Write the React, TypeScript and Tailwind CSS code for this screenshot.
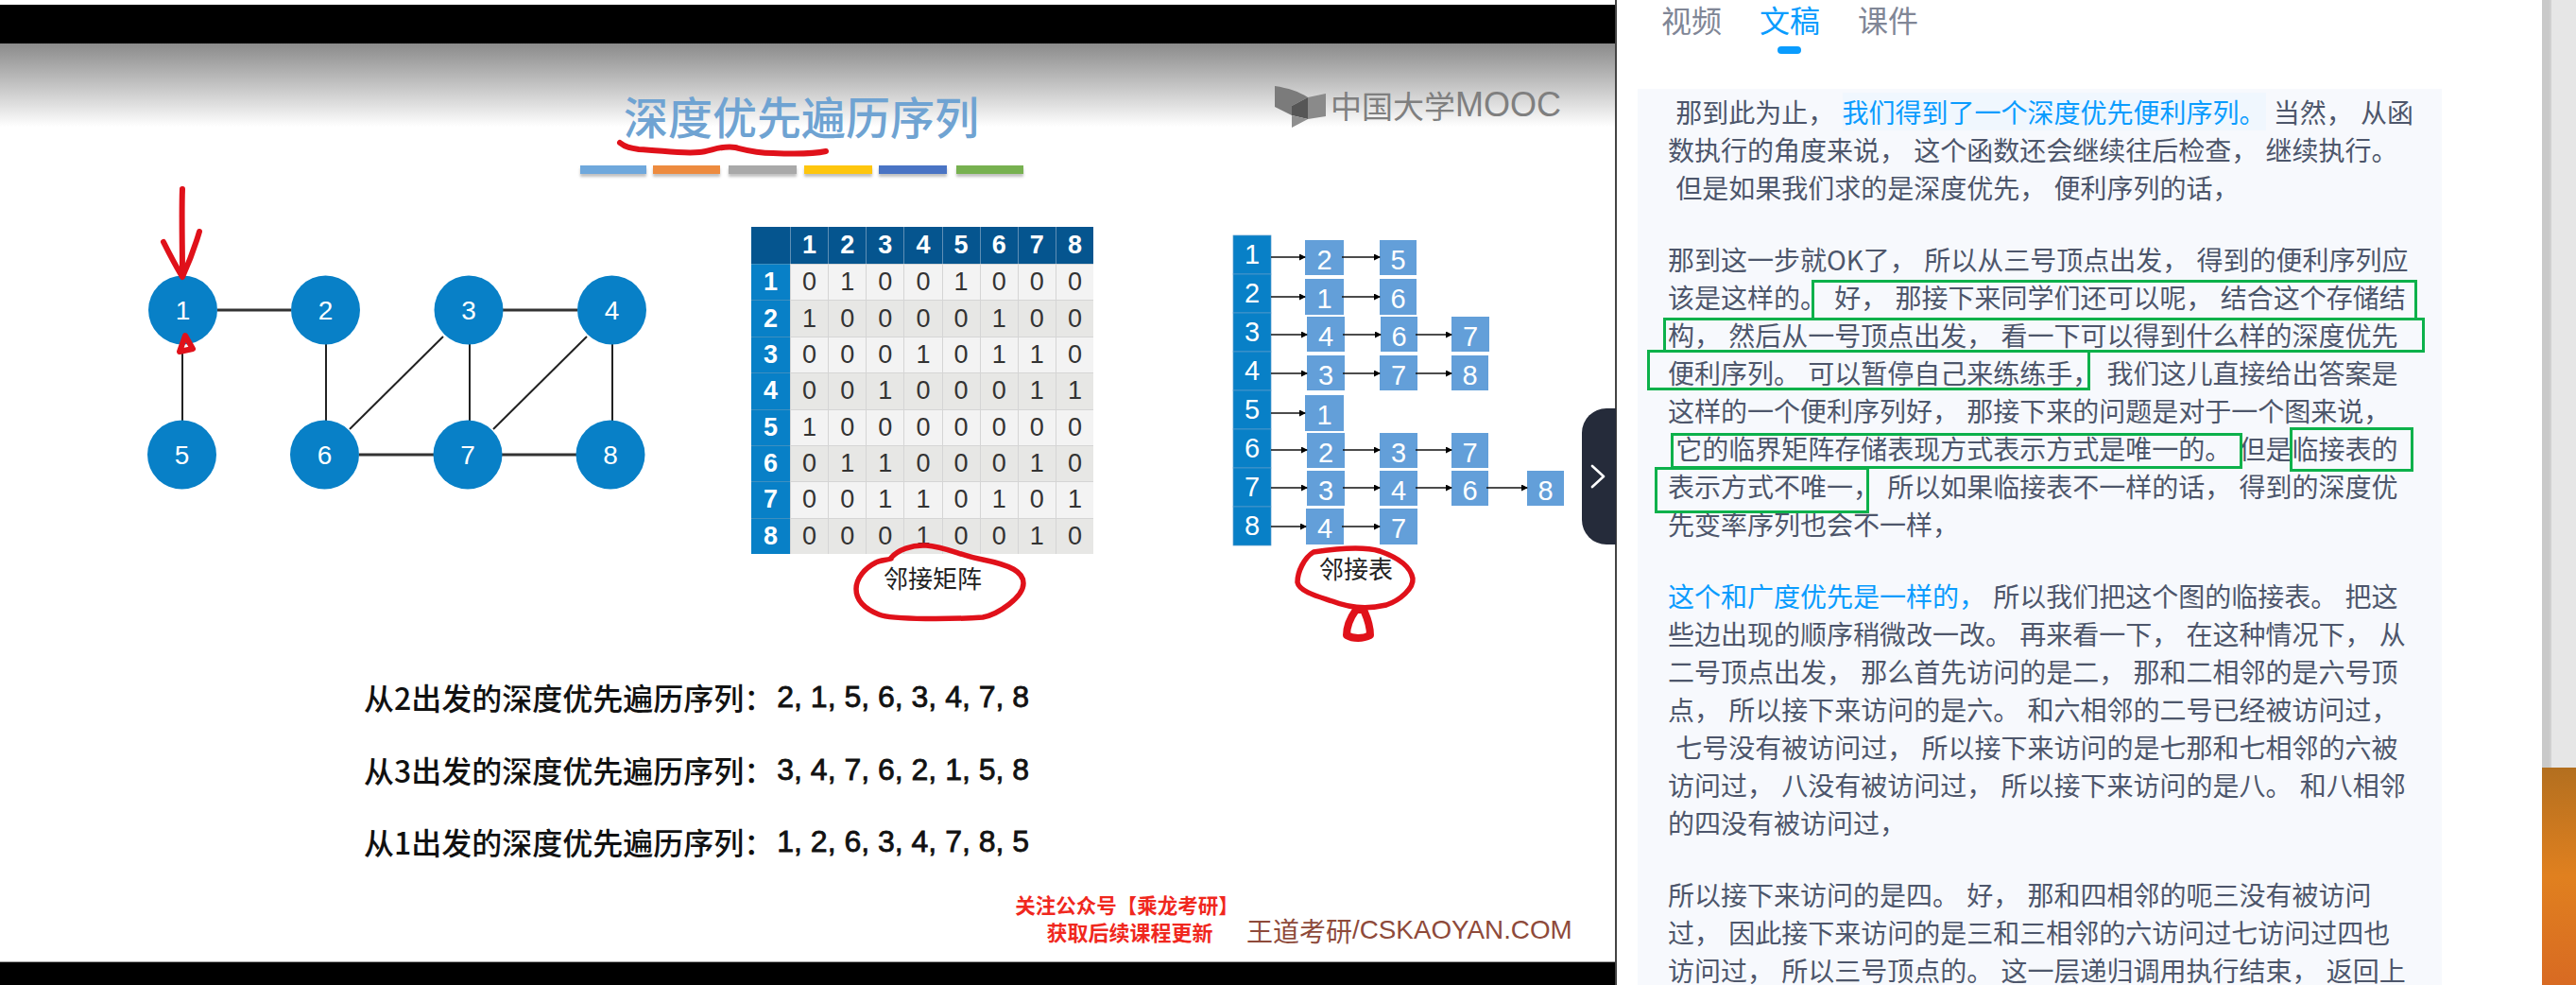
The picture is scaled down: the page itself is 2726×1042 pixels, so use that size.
import React from "react";

const cjk = "font-['Noto_Sans_CJK_SC','Liberation_Sans',sans-serif]";

const matrix = [
  [0, 1, 0, 0, 1, 0, 0, 0],
  [1, 0, 0, 0, 0, 1, 0, 0],
  [0, 0, 0, 1, 0, 1, 1, 0],
  [0, 0, 1, 0, 0, 0, 1, 1],
  [1, 0, 0, 0, 0, 0, 0, 0],
  [0, 1, 1, 0, 0, 0, 1, 0],
  [0, 0, 1, 1, 0, 1, 0, 1],
  [0, 0, 0, 1, 0, 0, 1, 0],
];

const nodes: [string, number, number][] = [
  ["1", 193.5, 328],
  ["2", 344.5, 328],
  ["3", 496, 328],
  ["4", 647.5, 328],
  ["5", 192.5, 481],
  ["6", 343.5, 481],
  ["7", 495, 481],
  ["8", 646, 481],
];

const thickEdges = [
  [230, 328, 308, 328],
  [532, 328, 611, 328],
  [380, 481, 459, 481],
  [531, 481, 610, 481],
];
const thinEdges = [
  [193, 364, 193, 446],
  [345, 364, 345, 446],
  [497, 364, 497, 446],
  [648, 364, 648, 446],
  [370, 454, 469, 356],
  [522, 454, 621, 356],
];

type Cell = [string, number, number];
const adjacency: { y: number; h: number; ay: number; row: string; cells: Cell[] }[] = [
  { row: "1", y: 254, h: 37, ay: 272, cells: [["2", 1381, 41], ["5", 1460, 39]] },
  { row: "2", y: 295, h: 38, ay: 314, cells: [["1", 1381, 41], ["6", 1460, 39]] },
  { row: "3", y: 335, h: 37, ay: 354, cells: [["4", 1383, 40], ["6", 1461, 39], ["7", 1536, 40]] },
  { row: "4", y: 376, h: 37, ay: 395, cells: [["3", 1383, 40], ["7", 1460, 40], ["8", 1536, 39]] },
  { row: "5", y: 418, h: 38, ay: 437, cells: [["1", 1381, 41]] },
  { row: "6", y: 458, h: 37, ay: 476, cells: [["2", 1383, 40], ["3", 1460, 40], ["7", 1536, 39]] },
  { row: "7", y: 498, h: 37, ay: 516, cells: [["3", 1383, 40], ["4", 1460, 40], ["6", 1536, 39], ["8", 1616, 39]] },
  { row: "8", y: 538, h: 38, ay: 557, cells: [["4", 1382, 40], ["7", 1460, 40]] },
];

const bars = [
  ["bg-[#6fa8dc]", "w-[70px]", "ml-0"],
  ["bg-[#ed8b3f]", "w-[71px]", "ml-[7px]"],
  ["bg-[#a9a9a9]", "w-[72px]", "ml-[9px]"],
  ["bg-[#fec60e]", "w-[72px]", "ml-[8px]"],
  ["bg-[#4a74c4]", "w-[72px]", "ml-[7px]"],
  ["bg-[#77b150]", "w-[71px]", "ml-[10px]"],
];

const Hi = ({ children }: { children: React.ReactNode }) => (
  <span className="text-[#0a9cfe]">{children}</span>
);

const paragraphs: React.ReactNode[][] = [
  [
    <>
      {" 那到此为止， "}
      <span className="text-[#0a9cfe] bg-[#f0f7fe]">我们得到了一个深度优先便利序列。</span>
      {" 当然， 从函"}
    </>,
    "数执行的角度来说， 这个函数还会继续往后检查， 继续执行。",
    " 但是如果我们求的是深度优先， 便利序列的话，",
  ],
  [
    "那到这一步就OK了， 所以从三号顶点出发， 得到的便利序列应",
    "该是这样的。 好， 那接下来同学们还可以呢， 结合这个存储结",
    "构， 然后从一号顶点出发， 看一下可以得到什么样的深度优先",
    "便利序列。 可以暂停自己来练练手， 我们这儿直接给出答案是",
    "这样的一个便利序列好， 那接下来的问题是对于一个图来说，",
    " 它的临界矩阵存储表现方式表示方式是唯一的。 但是临接表的",
    "表示方式不唯一， 所以如果临接表不一样的话， 得到的深度优",
    "先变率序列也会不一样，",
  ],
  [
    <>
      <Hi>这个和广度优先是一样的，</Hi>
      {" 所以我们把这个图的临接表。 把这"}
    </>,
    "些边出现的顺序稍微改一改。 再来看一下， 在这种情况下， 从",
    "二号顶点出发， 那么首先访问的是二， 那和二相邻的是六号顶",
    "点， 所以接下来访问的是六。 和六相邻的二号已经被访问过，",
    " 七号没有被访问过， 所以接下来访问的是七那和七相邻的六被",
    "访问过， 八没有被访问过， 所以接下来访问的是八。 和八相邻",
    "的四没有被访问过，",
  ],
  [
    "所以接下来访问的是四。 好， 那和四相邻的呃三没有被访问",
    "过， 因此接下来访问的是三和三相邻的六访问过七访问过四也",
    "访问过， 所以三号顶点的。 这一层递归调用执行结束， 返回上",
  ],
];

const greenBoxes = [
  "left-[206px] top-[296px] w-[641px] h-[43px]",
  "left-[49px] top-[336px] w-[806px] h-[37px]",
  "left-[32px] top-[370px] w-[469px] h-[43px]",
  "left-[57px] top-[458px] w-[605px] h-[38px]",
  "left-[712px] top-[452px] w-[131px] h-[47px]",
  "left-[40px] top-[494px] w-[227px] h-[49px]",
];

const seqs = [
  ["从2出发的深度优先遍历序列：", "2, 1, 5, 6, 3, 4, 7, 8", "top-[716px]"],
  ["从3出发的深度优先遍历序列：", "3, 4, 7, 6, 2, 1, 5, 8", "top-[793px]"],
  ["从1出发的深度优先遍历序列：", "1, 2, 6, 3, 4, 7, 8, 5", "top-[869px]"],
];

function Slide() {
  return (
    <section className="relative w-[1709px] h-full flex flex-col bg-white overflow-hidden">
      <div className="h-[5px] bg-white" />
      <div className="h-[41px] bg-black" />
      <div className="h-[88px] bg-gradient-to-b from-[#8b8b8b] to-white" />
      <div className="flex-1" />
      <div className="h-[25px] bg-black border-t border-[#999]" />

      <h1 className={`absolute left-[660px] top-[92px] text-[47px] leading-[60px] font-medium text-[#6fa3d2] whitespace-nowrap ${cjk}`}>
        深度优先遍历序列
      </h1>

      <div className="absolute left-[614px] top-[175px] flex">
        {bars.map(([c, w, m]) => (
          <div key={c} className={`h-[9px] ${c} ${w} ${m} shadow-[0_3px_3px_rgba(0,0,0,0.25)]`} />
        ))}
      </div>

      <div className="absolute left-[1349px] top-[91px] flex items-start">
        <svg width="56" height="46" viewBox="0 0 56 46" className="shrink-0">
          <path d="M0 0 C14 2 26 6 35 12 L18 21 L18 31 L0 22 Z" fill="#7b7b7b" />
          <path d="M18 21 L35 12 L35 35 L18 31 Z" fill="#565656" />
          <path d="M35 12 L54 8 L54 32 L35 35 Z" fill="#8a8a8a" />
          <path d="M18 31 L35 35 L18 44 Z" fill="#8f8f8f" />
        </svg>
        <span className={`ml-[3px] text-[33px] leading-[40px] text-[#7f7f7f] whitespace-nowrap ${cjk}`}>中国大学</span>
        <span className="text-[36px] leading-[40px] text-[#7f7f7f] font-['Liberation_Sans',sans-serif]">MOOC</span>
      </div>

      {/* matrix */}
      <div className="absolute left-[795px] top-[240px] w-[362px] h-[346px] grid grid-cols-[41px_repeat(8,1fr)] grid-rows-[39px_repeat(8,minmax(0,1fr))] leading-none font-['Liberation_Sans',sans-serif]">
        <div className="bg-[#05558f]" />
        {[1, 2, 3, 4, 5, 6, 7, 8].map((n) => (
          <div key={n} className="bg-[#05558f] border-l border-[#5f8fb5] flex items-center justify-center text-white text-[27px] font-bold">
            {n}
          </div>
        ))}
        {matrix.map((row, r) => (
          <React.Fragment key={r}>
            <div className="bg-[#0880c7] border-t border-[#3d8fc0] flex items-center justify-center text-white text-[27px] font-bold">
              {r + 1}
            </div>
            {row.map((v, c) => (
              <div
                key={c}
                className={`${r % 2 === 0 ? "bg-[#f3f3f3]" : "bg-[#e7e7e5]"} border-l border-t border-[#d5d5d5] flex items-center justify-center text-[#333] text-[27px]`}
              >
                {v}
              </div>
            ))}
          </React.Fragment>
        ))}
      </div>
      <div className={`absolute left-[935px] top-[593px] text-[26px] leading-[36px] text-[#222] whitespace-nowrap ${cjk}`}>邻接矩阵</div>
      <div className={`absolute left-[1396px] top-[583px] text-[26px] leading-[36px] text-[#222] whitespace-nowrap ${cjk}`}>邻接表</div>

      {/* graph, adjacency list and pen marks */}
      <svg className="absolute inset-0" width="1709" height="1042" viewBox="0 0 1709 1042">
        <defs>
          <marker id="ah" markerWidth="7" markerHeight="7" refX="6" refY="3.5" orient="auto" markerUnits="userSpaceOnUse">
            <path d="M0 0 L7 3.5 L0 7 Z" fill="#000" />
          </marker>
        </defs>

        {thickEdges.map((e, i) => (
          <line key={i} x1={e[0]} y1={e[1]} x2={e[2]} y2={e[3]} stroke="#333" strokeWidth="3" />
        ))}
        {thinEdges.map((e, i) => (
          <line key={i} x1={e[0]} y1={e[1]} x2={e[2]} y2={e[3]} stroke="#222" strokeWidth="2" />
        ))}
        {nodes.map(([t, x, y]) => (
          <g key={t}>
            <circle cx={x} cy={y} r="36.5" fill="#0880c7" />
            <text x={x} y={y + 10} textAnchor="middle" fontSize="28" fill="#fff" fontFamily="Liberation Sans, sans-serif">
              {t}
            </text>
          </g>
        ))}

        {adjacency.map((r, i) => {
          const y0 = 249 + i * 41;
          return (
            <g key={r.row} fontFamily="Liberation Sans, sans-serif" fontSize="29" fill="#fff">
              <rect x="1305" y={y0} width="40" height="41" fill="#0880c7" stroke="#5a9ccb" strokeWidth="0.7" />
              <text x="1325" y={y0 + 30} textAnchor="middle">
                {r.row}
              </text>
              {r.cells.map(([t, x, w], j) => {
                const prev = j === 0 ? 1345 : r.cells[j - 1][1] + r.cells[j - 1][2] - 2;
                return (
                  <g key={j}>
                    <rect x={x} y={r.y} width={w} height={r.h} fill="#639fd9" />
                    <text x={x + w / 2} y={r.y + 31} textAnchor="middle">
                      {t}
                    </text>
                    <line x1={prev} y1={r.ay} x2={x} y2={r.ay} stroke="#111" strokeWidth="1.5" markerEnd="url(#ah)" />
                  </g>
                );
              })}
            </g>
          );
        })}

        <g fill="none" stroke="#e0111a" strokeLinecap="round" strokeLinejoin="round">
          <path d="M656 151 C662 156 668 157 676 158 C700 159 722 163 740 161 C752 160 765 153 778 156 C790 159 800 162 818 162 C840 163 860 163 874 160" strokeWidth="6" />
          <path d="M193 200 C192 225 193 260 193 290" strokeWidth="6" />
          <path d="M173 256 C180 270 187 283 193 293 C199 280 206 262 211 245" strokeWidth="6" />
          <path d="M190 372 L196 355 L204 369 Z" strokeWidth="6" />
          <path d="M943 591 C937 593 932 592 927 595 C915 601 906 612 906 623 C906 635 915 644 930 650 C945 656 1010 655 1040 653 C1056 650 1083 632 1083 617 C1083 605 1070 598 1040 592 C1020 589 1000 578 980 577 C965 576 950 582 943 590" strokeWidth="5.5" />
          <path d="M1390 584 C1380 590 1373 605 1373 616 C1375 626 1395 631 1410 636 C1425 642 1445 645 1467 640 C1482 635 1496 622 1495 612 C1493 600 1480 590 1460 583 C1440 577 1410 581 1390 584 Z" strokeWidth="5.5" />
          <path d="M1435 645 C1430 652 1425 660 1425 672 C1432 676 1442 676 1450 672 C1450 660 1446 652 1443 645 Z" strokeWidth="8" />
        </g>
      </svg>

      {seqs.map(([a, b, top]) => (
        <div key={a} className={`absolute left-[385px] ${top} flex items-center h-[42px] whitespace-nowrap text-[32px] text-[#111] font-medium ${cjk}`}>
          <span>{a}</span>
          <span className="ml-[3px] font-['Liberation_Sans',sans-serif] [-webkit-text-stroke:0.8px_#111]">{b}</span>
        </div>
      ))}

      <div className={`absolute left-[1074px] top-[942px] w-[237px] flex flex-col items-center text-[#f0281e] font-bold ${cjk}`}>
        <span className="text-[21.5px] leading-[30px] whitespace-nowrap">关注公众号【乘龙考研】</span>
        <span className="text-[22px] leading-[27px] whitespace-nowrap ml-[6px]">获取后续课程更新</span>
      </div>
      <div className="absolute left-[1319px] top-[965px] flex items-center h-[38px] whitespace-nowrap text-[#8e4a3a]">
        <span className={`text-[28px] ${cjk}`}>王道考研</span>
        <span className="text-[27.8px] font-['Liberation_Sans',sans-serif]">/CSKAOYAN.COM</span>
      </div>
    </section>
  );
}

function Transcript() {
  return (
    <aside className={`relative w-[981px] h-full bg-white border-l-2 border-[#444] flex flex-col overflow-hidden ${cjk}`}>
      <nav className="h-[94px] shrink-0 flex items-start gap-[40px] pl-[47px] pt-[1px] text-[32px] leading-[38px] text-[#808696]">
        <span>视频</span>
        <span className="relative text-[#0a9cfe]">
          文稿
          <span className="absolute left-[19px] top-[48px] w-[25px] h-[8px] rounded-full bg-[#0a9cfe]" />
        </span>
        <span>课件</span>
      </nav>
      <div className="ml-[22px] w-[851px] flex-1 bg-[#f7f9fd] pl-[32px] pt-[4px] text-[28px] leading-[40px] text-[#4d566b]">
        {paragraphs.map((lines, i) => (
          <div key={i} className="mb-[36px]">
            {lines.map((l, j) => (
              <div key={j} className="whitespace-pre [word-spacing:2px]">
                {l}
              </div>
            ))}
          </div>
        ))}
      </div>
      {greenBoxes.map((b) => (
        <div key={b} className={`absolute ${b} border-[3px] border-[#0cb14b]`} />
      ))}
    </aside>
  );
}

export default function App() {
  return (
    <div className="relative flex w-[2726px] h-[1042px] overflow-hidden bg-white">
      <Slide />
      <Transcript />
      <div className="w-[36px] h-full flex flex-col">
        <div className="h-[812px] flex bg-[#e6e6e6]">
          <div className="w-[8px] bg-[#c9c9c9]" />
          <div className="w-[2px] bg-[#d0d0d0]" />
        </div>
        <div className="flex-1 bg-gradient-to-b from-[#b36f1f] via-[#e0801f] to-[#d86a22]" />
      </div>
      <button className="absolute left-[1674px] top-[432px] w-[36px] h-[144px] rounded-l-[26px] bg-[#252b3a] flex items-center justify-center pr-[3px]">
        <svg width="16" height="26" viewBox="0 0 16 26" fill="none" stroke="#fff" strokeWidth="2.6" strokeLinecap="round" strokeLinejoin="round">
          <path d="M2 2 L14 13 L2 24" />
        </svg>
      </button>
    </div>
  );
}
